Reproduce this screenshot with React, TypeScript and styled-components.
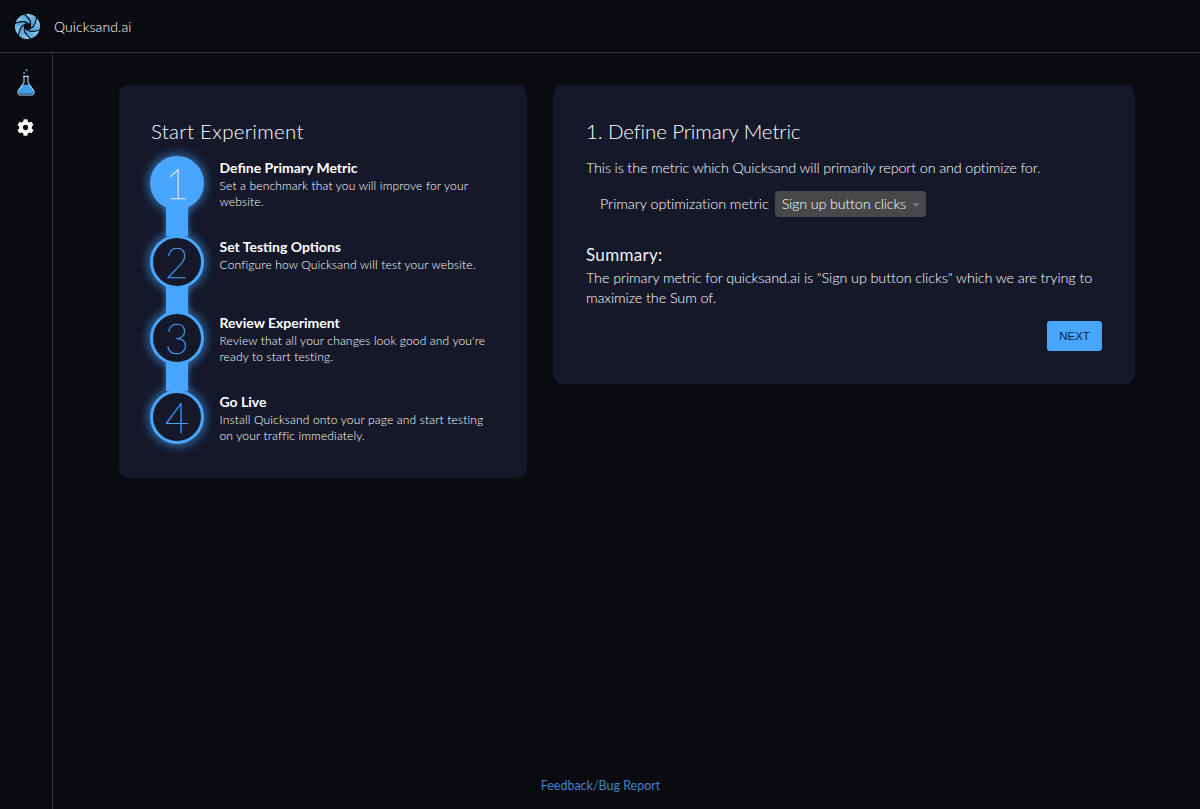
import styled, { createGlobalStyle } from "styled-components";
import { FaCog } from "react-icons/fa";

const FONT = `"Lato", "Noto Sans", sans-serif`;

const steps = [
  {
    num: 1,
    title: "Define Primary Metric",
    desc: "Set a benchmark that you will improve for your website.",
    active: true,
    height: 79,
  },
  {
    num: 2,
    title: "Set Testing Options",
    desc: "Configure how Quicksand will test your website.",
    active: false,
    height: 76,
  },
  {
    num: 3,
    title: "Review Experiment",
    desc: "Review that all your changes look good and you're ready to start testing.",
    active: false,
    height: 79,
  },
  {
    num: 4,
    title: "Go Live",
    desc: "Install Quicksand onto your page and start testing on your traffic immediately.",
    active: false,
    height: 60,
  },
];

function Logo() {
  const blades = [0, 60, 120, 180, 240, 300];
  return (
    <svg width="27" height="27" viewBox="-27 -27 54 54">
      <defs>
        <linearGradient id="blade" x1="0" y1="0" x2="1" y2="1">
          <stop offset="0" stopColor="#a6d8f6" />
          <stop offset="1" stopColor="#2f8ccb" />
        </linearGradient>
      </defs>
      {blades.map((deg) => (
        <path
          key={deg}
          transform={`rotate(${deg})`}
          d="M-6.7 -25.1 A26 26 0 0 1 18.4 -18.4 C16.6 -7.3 14.4 0.93 6 3.5 L6 -3.5 C8 -12 2 -18 -6.7 -25.1 Z"
          fill="url(#blade)"
          stroke="#0a0b10"
          strokeWidth="2"
        />
      ))}
    </svg>
  );
}

function Flask() {
  return (
    <svg width="18" height="27" viewBox="0 0 20 30">
      <circle cx="10.6" cy="1.4" r="1.2" fill="#5fb0ea" />
      <circle cx="7.8" cy="4.4" r="1" fill="#5fb0ea" />
      <path d="M5.6 17.5 H14.4 L18 23.4 C18.8 25.6 17.8 27.6 15.6 27.6 H4.4 C2.2 27.6 1.2 25.6 2 23.4 Z" fill="#3f9fe8" />
      <path
        d="M6.6 8.2 H13.4 M7.8 8.2 V15.2 L1.4 24.2 C0.4 26.4 1.6 28.9 4 28.9 H16 C18.4 28.9 19.6 26.4 18.6 24.2 L12.2 15.2 V8.2"
        fill="none"
        stroke="#a9d6f5"
        strokeWidth="1.2"
      />
    </svg>
  );
}

export default function App() {
  return (
    <>
      <GlobalStyle />
      <Page>
        <Header>
          <LogoBox>
            <Logo />
          </LogoBox>
          <Brand>Quicksand.ai</Brand>
        </Header>
        <Body>
          <Sidebar>
            <NavIcon>
              <Flask />
            </NavIcon>
            <NavIcon>
              <FaCog size={17} color="#fff" />
            </NavIcon>
          </Sidebar>
          <Main>
            <Cards>
              <StepsCard>
                <CardTitle $spacing={0.3}>Start Experiment</CardTitle>
                <StepList>
                  {steps.map((step, i) => (
                    <Step key={step.num} $height={step.height}>
                      <Circle $active={step.active} $last={i === steps.length - 1}>
                        {step.num}
                      </Circle>
                      <StepText>
                        <StepTitle>{step.title}</StepTitle>
                        <StepDesc>{step.desc}</StepDesc>
                      </StepText>
                    </Step>
                  ))}
                </StepList>
              </StepsCard>
              <DetailCard>
                <CardTitle $spacing={-0.12}>1. Define Primary Metric</CardTitle>
                <Intro>This is the metric which Quicksand will primarily report on and optimize for.</Intro>
                <MetricRow>
                  <MetricLabel>Primary optimization metric</MetricLabel>
                  <Select>
                    Sign up button clicks
                    <Caret />
                  </Select>
                </MetricRow>
                <SummaryTitle>Summary:</SummaryTitle>
                <SummaryText>
                  The primary metric for quicksand.ai is "Sign up button clicks" which we are trying to maximize the Sum of.
                </SummaryText>
                <Actions>
                  <NextButton>NEXT</NextButton>
                </Actions>
              </DetailCard>
            </Cards>
            <Footer>Feedback/Bug Report</Footer>
          </Main>
        </Body>
      </Page>
    </>
  );
}

const GlobalStyle = createGlobalStyle`
  html, body {
    margin: 0;
    padding: 0;
    background: #0a0b10;
  }
  * {
    box-sizing: border-box;
  }
`;
const Page = styled.div`
  width: 1200px;
  height: 809px;
  display: flex;
  flex-direction: column;
  background: #0a0b10;
  color: #fff;
  font-family: ${FONT};
  overflow: hidden;
`;
const Header = styled.div`
  height: 53px;
  flex-shrink: 0;
  display: flex;
  align-items: center;
  border-bottom: 1px solid #35363b;
`;
const LogoBox = styled.div`
  width: 54px;
  display: flex;
  justify-content: center;
`;
const Brand = styled.div`
  font-size: 14px;
  font-weight: 300;
  letter-spacing: 0.1px;
  color: #fff;
`;
const Body = styled.div`
  flex: 1;
  display: flex;
  min-height: 0;
`;
const Sidebar = styled.div`
  width: 53px;
  flex-shrink: 0;
  border-right: 1px solid #35363b;
  display: flex;
  flex-direction: column;
  align-items: center;
  padding: 15px 1px 0 0;
  gap: 17px;
`;
const NavIcon = styled.div`
  display: flex;
  align-items: center;
  justify-content: center;
  min-height: 28px;
`;
const Main = styled.div`
  flex: 1;
  display: flex;
  flex-direction: column;
  padding: 32px 65px 16px 66px;
`;
const Cards = styled.div`
  flex: 1;
  display: flex;
  align-items: flex-start;
  gap: 26px;
`;
const Card = styled.div`
  background: #141829;
  border-radius: 10px;
`;
const StepsCard = styled(Card)`
  width: 408px;
  height: 393px;
  padding: 33px 32px;
`;
const DetailCard = styled(Card)`
  width: 582px;
  height: 299px;
  padding: 33px;
`;
const CardTitle = styled.div<{ $spacing: number }>`
  margin-top: -1px;
  font-size: 20.5px;
  line-height: 28px;
  font-weight: 300;
  letter-spacing: ${(p) => p.$spacing}px;
  color: #fff;
`;
const StepList = styled.div`
  position: relative;
  z-index: 0;
  margin: 11px 0 0 -1px;
`;
const Step = styled.div<{ $height: number }>`
  display: flex;
  height: ${(p) => p.$height}px;
  gap: 15.5px;
`;
const Circle = styled.div<{ $active: boolean; $last: boolean }>`
  position: relative;
  width: 54px;
  height: 54px;
  flex-shrink: 0;
  border-radius: 50%;
  display: flex;
  align-items: center;
  justify-content: center;
  font-size: 41px;
  font-weight: 100;
  -webkit-text-stroke: 0.4px ${(p) => (p.$active ? "#d8eeff" : "#48a6ff")};
  color: ${(p) => (p.$active ? "#d8eeff" : "#48a6ff")};
  background: ${(p) => (p.$active ? "#48a6ff" : "#141829")};
  border: 3px solid #48a6ff;
  box-shadow: 0 0 8px 3px rgba(72, 166, 255, 0.5);
  &::after {
    content: "";
    display: ${(p) => (p.$last ? "none" : "block")};
    position: absolute;
    left: 13px;
    top: 47px;
    width: 22px;
    height: 30px;
    background: #48a6ff;
    box-shadow: 0 0 5px 1px rgba(72, 166, 255, 0.5);
    z-index: -1;
  }
`;
const StepText = styled.div`
  flex: 1;
  padding-top: 3px;
`;
const StepTitle = styled.div`
  font-size: 14px;
  line-height: 18px;
  font-weight: 700;
  color: #fff;
`;
const StepDesc = styled.div`
  margin-top: 1px;
  font-size: 12px;
  line-height: 16px;
  font-weight: 300;
  letter-spacing: 0.16px;
  color: #fff;
`;
const Intro = styled.div`
  margin-top: 13px;
  font-size: 14.4px;
  line-height: 20px;
  font-weight: 300;
  letter-spacing: -0.15px;
  color: #fff;
`;
const MetricRow = styled.div`
  margin-top: 13px;
  padding-left: 14px;
  display: flex;
  align-items: center;
  gap: 6px;
`;
const MetricLabel = styled.div`
  padding-bottom: 2px;
  font-size: 14.4px;
  font-weight: 300;
  letter-spacing: -0.05px;
  color: #fff;
`;
const Select = styled.div`
  width: 151px;
  height: 26px;
  padding: 0 6px 2px 7px;
  display: flex;
  align-items: center;
  justify-content: space-between;
  background: #46484a;
  border-radius: 4px;
  font-size: 14.4px;
  font-weight: 300;
  letter-spacing: -0.18px;
  color: #fff;
`;
const Caret = styled.span`
  width: 0;
  height: 0;
  margin-top: 4px;
  border-left: 4px solid transparent;
  border-right: 4px solid transparent;
  border-top: 4px solid #777;
`;
const SummaryTitle = styled.div`
  margin-top: 26px;
  font-size: 17px;
  line-height: 24px;
  font-weight: 400;
  letter-spacing: 0.3px;
  color: #f0f0f0;
`;
const SummaryText = styled.div`
  margin-top: 1px;
  font-size: 14.4px;
  line-height: 20px;
  font-weight: 300;
  letter-spacing: -0.1px;
  color: #fff;
`;
const Actions = styled.div`
  margin-top: 13px;
  display: flex;
  justify-content: flex-end;
`;
const NextButton = styled.button`
  width: 55px;
  height: 30px;
  border: none;
  border-radius: 3px;
  background: #48a6ff;
  color: #0b2340;
  font-family: "Liberation Sans", sans-serif;
  font-size: 11.5px;
  padding: 0;
`;
const Footer = styled.div`
  text-align: center;
  font-size: 12.5px;
  font-weight: 400;
  color: #4184c4;
  margin-left: -53px;
`;
